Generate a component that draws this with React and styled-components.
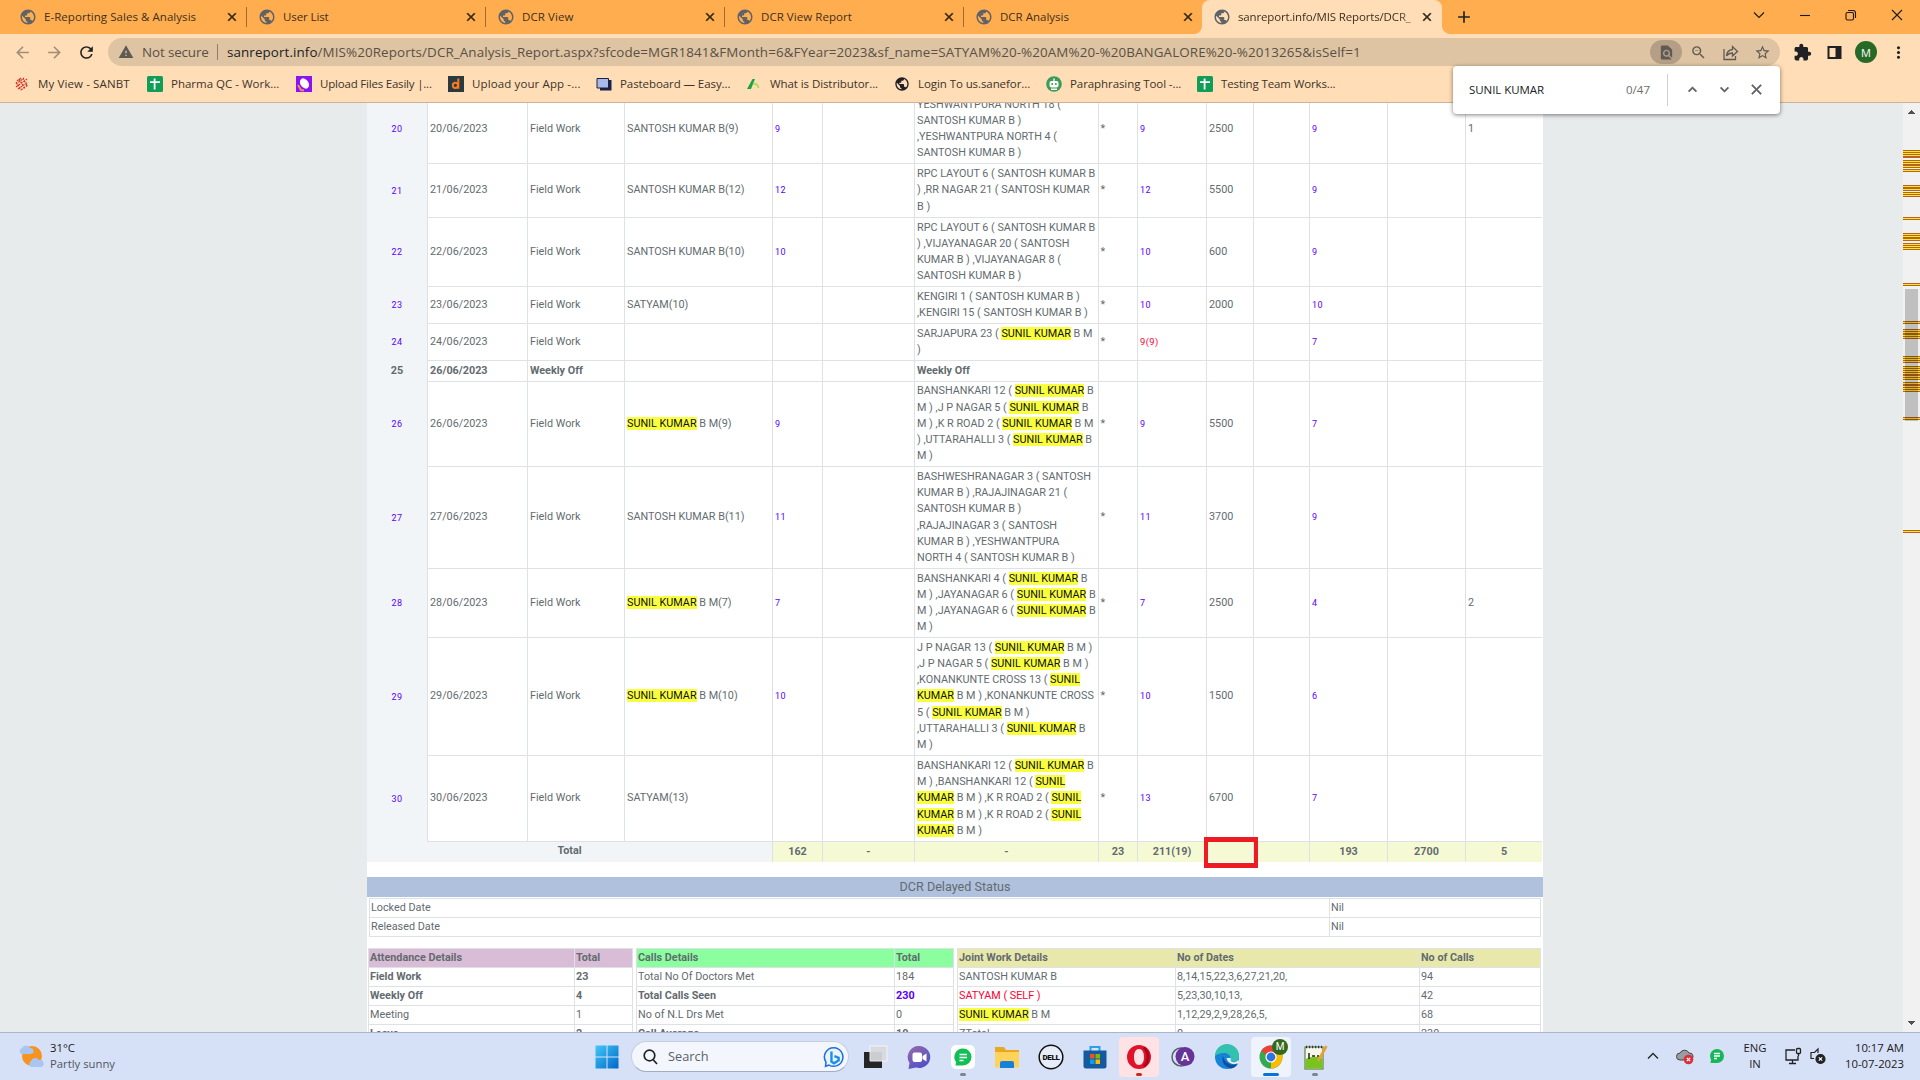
import React from "react";
import styled, { createGlobalStyle, css } from "styled-components";
import {
  MdArrowBack, MdArrowForward, MdRefresh, MdWarning, MdPublic, MdFindInPage,
  MdZoomOut, MdStarBorder, MdExtension, MdMoreVert, MdClose, MdAdd,
  MdKeyboardArrowUp, MdKeyboardArrowDown,
} from "react-icons/md";

const Global = createGlobalStyle`
  * { box-sizing: border-box; }
  html, body { margin: 0; padding: 0; overflow: hidden; }
  body { font-family: "Open Sans", "Noto Sans", sans-serif; font-size: 12px; color: #202124; }
`;

const Screen = styled.div`
  width: 1920px; height: 1080px; display: flex; flex-direction: column;
  position: relative; overflow: hidden;
`;

/* ---------- tab strip ---------- */
const TabStrip = styled.div`
  height: 34px; flex: none; background: #ffad4f; display: flex; padding-left: 8px;
`;
const Tab = styled.div`
  width: 239px; height: 34px; display: flex; align-items: center; position: relative;
  padding: 0 8px 0 12px; color: #3c3020; background: ${(p) => (p.$active ? "#ffddb6" : "transparent")};
  border-radius: ${(p) => (p.$active ? "8px 8px 0 0" : "0")};
  ${(p) => p.$line && css`&::after { content: ""; position: absolute; right: 0; top: 7px; width: 1px; height: 20px; background: #9d6c35; }`}
  ${(p) => p.$active && css`
    width: 240px; margin-left: -1px;
    &::before, &::after { content: ""; position: absolute; bottom: 0; width: 8px; height: 8px; }
    &::before { left: -8px; background: radial-gradient(circle at 0 0, #ffad4f 7.5px, #ffddb6 8.2px); }
    &::after { right: -8px; background: radial-gradient(circle at 100% 0, #ffad4f 7.5px, #ffddb6 8.2px); }
  `}
`;
const TabTitle = styled.span`
  flex: 1; margin-left: 8px; padding-bottom: 2px; white-space: nowrap; overflow: hidden; font-size: 11.5px;
  letter-spacing: ${(p) => p.$ls || 0}px;
  ${(p) => p.$fade && css`mask-image: linear-gradient(90deg, #000 88%, transparent 103%);`}
`;
const Fav = styled(MdPublic)`
  width: 18px; height: 18px; color: ${(p) => p.color || "#5f6368"}; margin: 0 -1px; flex: none;
`;
const TabClose = styled(MdClose)`
  width: 14px; height: 14px; color: #2f2718; flex: none;
  path:not([fill="none"]) { stroke: #2f2718; stroke-width: 1; }
`;
const NewTab = styled.div`width: 44px; display: flex; align-items: center; justify-content: center; svg { width: 20px; height: 20px; }`;
const WinButtons = styled.div`
  margin-left: auto; display: flex; align-items: center; height: 29px;
  svg { width: 46px; height: 14px; fill: none; stroke: #1b1b1b; stroke-width: 1.1; }
`;

/* ---------- toolbar ---------- */
const Toolbar = styled.div`
  height: 36px; flex: none; background: #ffddb6; display: flex; align-items: center; padding-left: 6px;
`;
const NavButton = styled.div`
  width: 32px; display: flex; justify-content: center; color: ${(p) => (p.$dim ? "#a08e78" : "#202124")};
  svg { width: 19px; height: 19px; }
`;
const Omnibox = styled.div`
  margin-left: 6px; width: 1672px; height: 28px; border-radius: 14px; background: #dec4a2;
  display: flex; align-items: center; padding-left: 10px; font-size: 13.4px; color: #5a5046;
  svg { color: #5f5a54; flex: none; }
`;
const NotSecure = styled.span`margin-left: 8px; width: 75px; white-space: nowrap; letter-spacing: -0.12px;`;
const OmniLine = styled.i`width: 1px; height: 16px; background: #8f7d68; margin-right: 9px;`;
const Url = styled.span`
  flex: 1; white-space: nowrap; letter-spacing: 0.1px;
  b { font-weight: 400; color: #202124; }
`;
const OmniIcon = styled.div`
  width: 32px; height: 24px; border-radius: 12px; display: flex; align-items: center; justify-content: center;
  background: ${(p) => (p.$on ? "#b49f86" : "none")};
  svg { width: 17px; height: 17px; }
`;
const OmniTail = styled.i`width: 2px;`;
const ToolIcon = styled.div`
  width: 32px; display: flex; justify-content: center; margin-left: ${(p) => p.$gap || 0}px;
  svg { width: 19px; height: 19px; }
`;
const Avatar = styled.div`
  width: 22px; height: 22px; border-radius: 50%; background: #276a27; color: #fff; font-size: 11px;
  display: flex; align-items: center; justify-content: center;
`;

/* ---------- bookmarks ---------- */
const Bookmarks = styled.div`
  height: 33px; flex: none; background: #ffddb6; border-bottom: 1px solid #cdb294;
  display: flex; align-items: flex-start; padding: 6px 0 0 14px; color: #3c3428;
`;
const Bookmark = styled.div`
  width: ${(p) => p.$w}px; flex: none; display: flex; align-items: center; height: 16px; white-space: nowrap;
  font-size: 11.5px; letter-spacing: ${(p) => p.$ls}px;
  & > svg { width: 16px; height: 16px; margin-right: 8px; flex: none; }
  & > span { padding-bottom: 1px; }
`;

/* ---------- find bar ---------- */
const FindBar = styled.div`
  position: absolute; left: 1453px; top: 66px; width: 327px; height: 48px; z-index: 5; background: #fff;
  border-radius: 4px; box-shadow: 0 1px 4px rgba(0,0,0,.5); display: flex; align-items: center; padding-left: 16px;
  font-size: 11.5px; letter-spacing: 0; padding-bottom: 1px;
`;
const FindText = styled.span`padding-bottom: 1px; letter-spacing: -0.05px;`;
const FindCount = styled.span`margin-left: auto; color: #6c6c6c; padding: 0 17px 1px 0;`;
const FindLine = styled.i`width: 1px; height: 32px; background: #d0d0d0; margin-right: 8px;`;
const FindBtn = styled.div`
  width: 32px; display: flex; justify-content: center; color: #5f6368;
  svg { width: 17px; height: 17px; }
  path:not([fill="none"]) { stroke: #5f6368; stroke-width: .8; }
  &:last-child { margin-right: 8px; }
`;

/* ---------- page ---------- */
const Viewport = styled.div`height: 929px; flex: none; display: flex; background: #e7ebec; overflow: hidden;`;
const Page = styled.div`
  width: 1176px; margin-left: 367px; background: #fff; height: 929px; overflow: hidden; position: relative; flex: none;
  font-family: Roboto, sans-serif; font-size: 10.8px; line-height: 16.2px; color: #636b70;
`;
const COLS = "60px 100px 97px 148px 50px 92px 184px 39px 69px 47px 56px 78px 78px 77px";
const Report = styled.div`margin-top: -8px; width: 1175px;`;
const Row = styled.div`
  display: grid; grid-template-columns: ${COLS}; height: ${(p) => p.$h}px;
  font-weight: ${(p) => (p.$bold ? 700 : 400)};
`;
const Cell = styled.div`
  border-left: 1px solid #dee2e6; border-bottom: 1px solid #dee2e6; padding-left: ${(p) => p.$pad || 2}px;
  display: flex; align-items: center; white-space: nowrap;
`;
const SerialCell = styled.div`
  background: #f1f5f8; display: flex; align-items: center; justify-content: center;
`;
const Num = styled.span`
  font-size: ${(p) => (p.$red ? 9.4 : 9)}px; letter-spacing: .4px; color: ${(p) => (p.$red ? "#ff0033" : "#5a00ff")};
`;
const Mark = styled.mark`background: #f9ff3e; color: #111;`;
const TotalRow = styled.div`
  display: grid; grid-template-columns: 405px 50px 92px 184px 39px 69px 47px 56px 78px 78px 77px; height: 20px;
  font-weight: 700;
`;
const TotalCell = styled.div`
  background: ${(p) => (p.$lead ? "#f1f5f8" : "#f6fad4")}; border-left: ${(p) => (p.$lead ? "0" : "1px solid #dee2e6")};
  display: flex; align-items: center; justify-content: center; padding-bottom: ${(p) => (p.$lead ? "2px" : "0")};
`;
const RedBox = styled.div`
  position: absolute; left: 837px; top: 734px; width: 54px; height: 31px; border: 5px solid #ed1c24; border-width: 5px 4px;
`;
const Banner = styled.div`
  margin-top: 15px; height: 20px; background: #b0c1dd; display: flex; justify-content: center; align-items: center;
  font-size: 12.6px;
`;
const Sheet = styled.div`
  display: grid; grid-template-columns: ${(p) => p.$cols}; border-top: 1px solid #dee2e6; border-right: 1px solid #dee2e6;
`;
const SheetCell = styled.div`
  height: 19px; border-left: 1px solid #dee2e6; border-bottom: 1px solid #dee2e6; white-space: nowrap;
  padding-left: 1px; line-height: 18px; background: ${(p) => p.$bg || "#fff"};
  font-weight: ${(p) => (p.$bold ? 700 : 400)}; color: ${(p) => p.$color || "inherit"};
`;
const DelayedWrap = styled.div`margin: 1px 2px 0;`;
const Summaries = styled.div`display: flex; gap: 3px; margin: 11px 2px 0 1px;`;

const ScrollTrack = styled.div`
  width: 17px; height: 929px; margin-left: auto; background: #f1f1f1; flex: none;
  svg { display: block; }
`;

/* ---------- taskbar ---------- */
const Taskbar = styled.div`
  height: 48px; flex: none; background: #d6e1f7; border-top: 1px solid #a9b5c9; display: flex; align-items: center;
  font-size: 11.3px; color: #1b1b1b; line-height: 16px;
`;
const Weather = styled.div`
  width: 585px; padding-left: 18px; display: flex; align-items: center; gap: 6px; padding-bottom: 2px;
  svg { width: 26px; height: 26px; }
  small { font-size: 11.3px; color: #50565f; display: block; }
`;
const TaskCell = styled.div`width: 44px; height: 47px; display: flex; align-items: center; justify-content: center; position: relative;`;
const Tile = styled.div`
  width: 40px; height: 40px; border-radius: 4px; display: flex; align-items: center; justify-content: center;
  background: ${(p) => p.$bg || "none"};
  svg { width: 26px; height: 26px; }
`;
const Dot = styled.i`
  position: absolute; bottom: 4px; height: 3px; border-radius: 2px; width: ${(p) => p.$w || 6}px; background: ${(p) => p.$c || "#7c8694"};
`;
const SearchPill = styled.div`
  margin: 0 4px 0 2px; width: 218px; height: 31px; border-radius: 16px; background: #f3f6fd; border: 1px solid #c6cfe0; border-bottom-color: #a3adc0;
  display: flex; align-items: center; padding: 0 3px 0 10px; font-size: 12.8px; color: #5c6169;
  span { flex: 1; margin-left: 10px; padding-bottom: 1px; }
`;
const Tray = styled.div`
  margin-left: auto; display: flex; align-items: center; padding-right: 16px; padding-bottom: 1px;
  svg { flex: none; }
`;
const TrayIcon = styled.div`display: flex; margin-right: ${(p) => p.$gap}px;`;
const Lang = styled.div`width: 32px; text-align: center; margin-right: 13px;`;
const Clock = styled.div`width: 64px; text-align: right; white-space: nowrap; direction: ltr;`;
const ChromeBadge = styled.div`
  position: absolute; right: 5px; top: 6px; width: 16px; height: 16px; border-radius: 50%; background: #33691e; color: #fff;
  font: 10px/16px Roboto, sans-serif; text-align: center;
`;

/* ---------- data ---------- */
const rows = [
  { n: "20", h: 69, date: "20/06/2023", who: "SANTOSH KUMAR B(9)", a: "9", terr: ["YESHWANTPURA NORTH 18 (", "SANTOSH KUMAR B )", ",YESHWANTPURA NORTH 4 (", "SANTOSH KUMAR B )"], met: "9", pob: "2500", chem: "9", last: "1" },
  { n: "21", h: 54, date: "21/06/2023", who: "SANTOSH KUMAR B(12)", a: "12", terr: ["RPC LAYOUT 6 ( SANTOSH KUMAR B", ") ,RR NAGAR 21 ( SANTOSH KUMAR", "B )"], met: "12", pob: "5500", chem: "9" },
  { n: "22", h: 69, date: "22/06/2023", who: "SANTOSH KUMAR B(10)", a: "10", terr: ["RPC LAYOUT 6 ( SANTOSH KUMAR B", ") ,VIJAYANAGAR 20 ( SANTOSH", "KUMAR B ) ,VIJAYANAGAR 8 (", "SANTOSH KUMAR B )"], met: "10", pob: "600", chem: "9" },
  { n: "23", h: 37, date: "23/06/2023", who: "SATYAM(10)", terr: ["KENGIRI 1 ( SANTOSH KUMAR B )", ",KENGIRI 15 ( SANTOSH KUMAR B )"], met: "10", pob: "2000", chem: "10" },
  { n: "24", h: 37, date: "24/06/2023", terr: ["SARJAPURA 23 ( [SUNIL KUMAR] B M", ")"], met: "9(9)", red: true, chem: "7" },
  { n: "25", h: 21, date: "26/06/2023", off: true, terr: ["Weekly Off"] },
  { n: "26", h: 85, date: "26/06/2023", who: "[SUNIL KUMAR] B M(9)", a: "9", terr: ["BANSHANKARI 12 ( [SUNIL KUMAR] B", "M ) ,J P NAGAR 5 ( [SUNIL KUMAR] B", "M ) ,K R ROAD 2 ( [SUNIL KUMAR] B M", ") ,UTTARAHALLI 3 ( [SUNIL KUMAR] B", "M )"], met: "9", pob: "5500", chem: "7" },
  { n: "27", h: 102, date: "27/06/2023", who: "SANTOSH KUMAR B(11)", a: "11", terr: ["BASHWESHRANAGAR 3 ( SANTOSH", "KUMAR B ) ,RAJAJINAGAR 21 (", "SANTOSH KUMAR B )", ",RAJAJINAGAR 3 ( SANTOSH", "KUMAR B ) ,YESHWANTPURA", "NORTH 4 ( SANTOSH KUMAR B )"], met: "11", pob: "3700", chem: "9" },
  { n: "28", h: 69, date: "28/06/2023", who: "[SUNIL KUMAR] B M(7)", a: "7", terr: ["BANSHANKARI 4 ( [SUNIL KUMAR] B", "M ) ,JAYANAGAR 6 ( [SUNIL KUMAR] B", "M ) ,JAYANAGAR 6 ( [SUNIL KUMAR] B", "M )"], met: "7", pob: "2500", chem: "4", last: "2" },
  { n: "29", h: 118, date: "29/06/2023", who: "[SUNIL KUMAR] B M(10)", a: "10", terr: ["J P NAGAR 13 ( [SUNIL KUMAR] B M )", ",J P NAGAR 5 ( [SUNIL KUMAR] B M )", ",KONANKUNTE CROSS 13 ( [SUNIL]", "[KUMAR] B M ) ,KONANKUNTE CROSS", "5 ( [SUNIL KUMAR] B M )", ",UTTARAHALLI 3 ( [SUNIL KUMAR] B", "M )"], met: "10", pob: "1500", chem: "6" },
  { n: "30", h: 86, date: "30/06/2023", who: "SATYAM(13)", terr: ["BANSHANKARI 12 ( [SUNIL KUMAR] B", "M ) ,BANSHANKARI 12 ( [SUNIL]", "[KUMAR] B M ) ,K R ROAD 2 ( [SUNIL]", "[KUMAR] B M ) ,K R ROAD 2 ( [SUNIL]", "[KUMAR] B M )"], met: "13", pob: "6700", chem: "7" },
];

const Marked = ({ text = "" }) => (
  <span>
    {text.split(/(\[[^\]]+\])/).map((s, i) => (s[0] === "[" ? <Mark key={i}>{s.slice(1, -1)}</Mark> : s))}
  </span>
);

const DayRow = ({ r }) => (
  <Row $h={r.h} $bold={r.off}>
    <SerialCell>{r.off ? r.n : <Num>{r.n}</Num>}</SerialCell>
    <Cell>{r.date}</Cell>
    <Cell>{r.off ? "Weekly Off" : "Field Work"}</Cell>
    <Cell><Marked text={r.who} /></Cell>
    <Cell><Num>{r.a}</Num></Cell>
    <Cell />
    <Cell><div>{r.terr.map((t, i) => <div key={i}><Marked text={t} /></div>)}</div></Cell>
    <Cell $pad={1.5}>{r.off ? "" : "*"}</Cell>
    <Cell><Num $red={r.red}>{r.met}</Num></Cell>
    <Cell>{r.pob}</Cell>
    <Cell />
    <Cell><Num>{r.chem}</Num></Cell>
    <Cell />
    <Cell>{r.last}</Cell>
  </Row>
);

const totals = ["162", "-", "-", "23", "211(19)", "", "", "193", "2700", "5"];

const Table = ({ cols, head, bg, data }) => (
  <Sheet $cols={cols}>
    {head.map((h) => <SheetCell key={h} $bold $bg={bg}>{h}</SheetCell>)}
    {data.map((r, i) => r.c.map((c, j) => (
      <SheetCell key={i + "-" + j} $bold={r.bold} $color={(j === 0 && r.color) || (j === 1 && r.numColor)}>
        <Marked text={c} />
      </SheetCell>
    )))}
  </Sheet>
);

/* vertical positions of find hits on the scroll track: b = edge, y = core */
const hits = [
  [150, "bybybybb"], [160, "bybybbyb"], [169, "byb"], [185, "bybbyb"], [192, "bybyb"], [217, "byb"],
  [233, "bybybbyb"], [243, "bybybyb"], [283, "byb"], [321, "byb"], [329, "bybybbybyb"], [356, "bybybyb"],
  [366, "bybybybybbybyb"], [382, "bybbybybyb"], [417, "byb"], [530, "byb"],
];
const Scrollbar = () => (
  <ScrollTrack>
    <svg width="17" height="929" shapeRendering="crispEdges">
      {hits.map(([y, p]) => p.split("").map((c, i) => (
        <rect key={y + "-" + i} x="0" y={y - 103 + i} width="17" height="1" fill={c === "b" ? "#b5651a" : "#ffe432"} />
      )))}
      <rect x="2" y="186" width="13" height="132" fill="rgba(0,0,0,.2)" />
      <path d="M5 11h7l-3.5-4z" fill="#505050" />
      <path d="M5 918h7l-3.5 4z" fill="#505050" />
    </svg>
  </ScrollTrack>
);

const Glyph = ({ children }) => <svg viewBox="0 0 16 16">{children}</svg>;
const Sheets = () => (
  <Glyph><rect width="16" height="16" rx="1.5" fill="#0f9d58" /><path d="M3 6.2h10M7.6 2.5v11" stroke="#fff" strokeWidth="1.8" /></Glyph>
);

const bookmarks = [
  [133, "My View - SANBT", 0.12, <Glyph><g stroke="#d1342b" strokeWidth="1.2" fill="none" strokeDasharray="2 1"><path d="M3 5l4-3M2 8l8-6M2 11l11-8M4 13l10-7M7 14l7-5M2 6l5 8M5 3l6 10M9 2l4 8" /></g></Glyph>],
  [149, "Pharma QC - Work...", 0, <Sheets />],
  [152, "Upload Files Easily |...", -0.2, <Glyph><rect width="16" height="16" fill="#8a12f5" /><ellipse cx="8.5" cy="7.5" rx="4" ry="5.6" transform="rotate(-35 8.5 7.5)" fill="#fff" /><path d="M2 9l3 5 3 .5" stroke="#f08b5c" strokeWidth="2" fill="none" /></Glyph>],
  [148, "Upload your App -...", 0.12, <Glyph><rect width="16" height="16" fill="#2b3a3f" /><circle cx="7.4" cy="9.3" r="2.6" fill="none" stroke="#ff7a1a" strokeWidth="2" /><path d="M10.3 2.5v10.3" stroke="#ff7a1a" strokeWidth="2" /></Glyph>],
  [150, "Pasteboard — Easy...", -0.08, <Glyph><path d="M4 4h11.500v10.500H4z" fill="#1b2145" /><path d="M1 2.500h11.500v9.500H1z" fill="#a9b8e8" stroke="#1b2145" /></Glyph>],
  [149, "What is Distributor...", -0.08, <Glyph><path d="M1 13L6.500 3h2.500L5 13z" fill="#19a34a" /><path d="M7 8c3-1 5 1 5.500 4" stroke="#a7e05d" strokeWidth="2" fill="none" /></Glyph>],
  [151, "Login To us.sanefor...", -0.08, <Fav color="#202124" />],
  [151, "Paraphrasing Tool -...", -0.08, <Glyph><circle cx="8" cy="8" r="7.800" fill="#3f9a55" /><rect x="3.500" y="5" width="9" height="6.500" rx="2" fill="#fff" /><path d="M8 2.500V5M5 13.200h6" stroke="#fff" strokeWidth="1.400" /><circle cx="6.200" cy="8" r="1" fill="#3f9a55" /><circle cx="9.800" cy="8" r="1" fill="#3f9a55" /></Glyph>],
  [150, "Testing Team Works...", -0.13, <Sheets />],
];

const tabs = [
  ["E-Reporting Sales & Analysis", 0.05], ["User List", -0.1], ["DCR View", 0.1], ["DCR View Report", 0.05], ["DCR Analysis", 0],
];

const I = ({ children, ...p }) => <svg viewBox="0 0 26 26" {...p}>{children}</svg>;
const icons = {
  start: <I><defs><linearGradient id="win" x1="0" y1="0" x2="1" y2="1"><stop stopColor="#42c8f8" /><stop offset="1" stopColor="#0067c8" /></linearGradient></defs><path d="M1.500 1.500h11v11h-11zM13.500 1.500h11v11h-11zM1.500 13.500h11v11h-11zM13.500 13.500h11v11h-11z" fill="url(#win)" /></I>,
  taskview: <I><path d="M2 8h18v16H2z" fill="#252525" /><path d="M8 2h17v15H8z" fill="#d9dadd" stroke="#f6f6f6" opacity=".93" /></I>,
  chat: <I><defs><linearGradient id="chat" x1="0" y1="0" x2="0.6" y2="1"><stop stopColor="#9a6aa8" /><stop offset="1" stopColor="#4f52c8" /></linearGradient></defs><path d="M13 2a11 11 0 1 1-3 21.500L2.500 25l1-6A11 11 0 0 1 13 2z" fill="url(#chat)" /><rect x="6.500" y="8.500" width="9.500" height="9.500" rx="2" fill="#fff" /><path d="M16.500 12l4-2.500v8l-4-2.500z" fill="#fff" /></I>,
  green: <I><rect x="1" y="1" width="24" height="24" rx="5" fill="#fff" /><path d="M13 4.500a8.500 8.500 0 0 1 0 17H5.500L6 18A8.500 8.500 0 0 1 13 4.500z" fill="#10bf55" /><path d="M9.500 10.500h7.500M9.500 13.500h7.500M9.500 16.500h4" stroke="#fff" strokeWidth="1.600" /></I>,
  folder: <I><path d="M1 3h9l2 3h13v17H1z" fill="#e9a820" /><path d="M1 8h24v15.500H1z" fill="#ffd35a" /><path d="M6 24v-5q0-2 2-2h10q2 0 2 2v5z" fill="#1681d8" /></I>,
  dell: <I><circle cx="13" cy="13" r="11.800" fill="#e6edf8" stroke="#111" strokeWidth="1.500" /><text x="13" y="16" textAnchor="middle" fontFamily="Roboto" fontSize="8" fontWeight="900" fill="#111" letterSpacing="-.3">DELL</text></I>,
  store: <I><path d="M8.500 7V3h9v4" fill="none" stroke="#2aa0e8" strokeWidth="2" /><path d="M1.500 6.500h23V22q0 2.500-2.500 2.500H4Q1.500 24.500 1.500 22z" fill="#155a9e" /><path d="M8 10h4.500v4.500H8z" fill="#f25022" /><path d="M13.500 10H18v4.500h-4.500z" fill="#7fba00" /><path d="M8 15.500h4.500V20H8z" fill="#00a4ef" /><path d="M13.500 15.500H18V20h-4.500z" fill="#ffb900" /></I>,
  opera: <I><path fillRule="evenodd" d="M13 1a12 12 0 1 0 0 24a12 12 0 1 0 0-24zM13 5c3.300 0 5 3.500 5 8s-1.700 8-5 8s-5-3.500-5-8s1.700-8 5-8z" fill="#e3122b" /><path d="M18 3.500q4 4 4 9.500t-4 9.500" stroke="#a8081d" strokeWidth="3" fill="none" /></I>,
  a: <I><circle cx="11" cy="13" r="9" fill="none" stroke="#5a5f69" strokeWidth="1.500" /><circle cx="15" cy="12.500" r="9.500" fill="#663399" /><text x="15" y="17" textAnchor="middle" fontFamily="Roboto" fontSize="13" fontWeight="500" fill="#fff">A</text></I>,
  edge: <I><circle cx="13" cy="13" r="12" fill="#1583d8" /><path d="M1 12A12 12 0 0 1 25 12c0 4-3 6-6.500 6s-3-2-2-4c0-3-3-5-6.500-5S2 10.500 1 12z" fill="#35c1b0" /><path d="M9 12c-2 6 2 11 8 12.500c3-.5 5.500-2 7-5c-5 3-13 1-15-7.500z" fill="#0d4f9e" /><path d="M17 14c-1 2-.5 4 2 4.300c2 0 4-.6 5.200-2.300l.3 2.500c-5 3.500-11 .5-12-4.500z" fill="#e6f2fb" /></I>,
  chrome: <I><circle cx="13" cy="13" r="11.500" fill="#34a853" /><path d="M13 13L3 7.300A11.500 11.500 0 0 1 23 7.300z" fill="#ea4335" /><path d="M13 13L23 7.300A11.500 11.500 0 0 1 13 24.500z" fill="#fbbc04" /><circle cx="13" cy="13" r="5.600" fill="#fff" /><circle cx="13" cy="13" r="4.400" fill="#2f74e0" /></I>,
  notepad: <I><rect x="3" y="3" width="18" height="22" fill="#f5f7e8" stroke="#4c6b2a" /><path d="M3.500 15q9-4 17-1v10.500h-17z" fill="#79c31e" /><path d="M4 3h16" stroke="#333" strokeWidth="2.500" strokeDasharray="1.200 1.800" /><path d="M7 9v6M10 12h3M15 12h2" stroke="#222" strokeWidth="1.500" /><path d="M24.500 2L16 17" stroke="#e8a030" strokeWidth="2.600" /></I>,
  bing: <I><path d="M13 2a11 11 0 1 1-6 20.500L3 24l.5-5A11 11 0 0 1 13 2z" fill="#eaf4ff" stroke="#1b6fe0" strokeWidth="1.800" /><path d="M10 6.500v12l3 2l5.500-3.500v-3l-5-2" fill="none" stroke="#1c8ce8" strokeWidth="2.800" /></I>,
};

const apps = [
  { k: "taskview" }, { k: "chat" }, { k: "green", dot: {} }, { k: "folder" }, { k: "dell" }, { k: "store" },
  { k: "opera", bg: "#ffe3e4", dot: { $c: "#c42b1c" } }, { k: "a" }, { k: "edge" },
  { k: "chrome", bg: "#eff4fc", dot: { $w: 16, $c: "#0a74d6" } }, { k: "notepad", dot: {} },
];

export default function App() {
  return (
    <Screen>
      <Global />
      <TabStrip>
        {tabs.map(([t, ls]) => (
          <Tab key={t} $line={t !== "DCR Analysis"}><Fav /><TabTitle $ls={ls}>{t}</TabTitle><TabClose /></Tab>
        ))}
        <Tab $active><Fav /><TabTitle $fade $ls={-0.15}>sanreport.info/MIS Reports/DCR_</TabTitle><TabClose /></Tab>
        <NewTab><MdAdd /></NewTab>
        <WinButtons>
          <svg viewBox="0 0 46 14"><path d="M18 4.500l5 5 5-5" /></svg>
          <svg viewBox="0 0 46 14"><path d="M18 7.500h10" /></svg>
          <svg viewBox="0 0 46 14"><rect x="18" y="4.500" width="7.500" height="7.500" rx="1.500" /><path d="M20 2.500h5q2.500 0 2.500 2.500v5" /></svg>
          <svg viewBox="0 0 46 14"><path d="M18 2l10 10M28 2L18 12" /></svg>
        </WinButtons>
      </TabStrip>
      <Toolbar>
        <NavButton $dim><MdArrowBack /></NavButton>
        <NavButton $dim><MdArrowForward /></NavButton>
        <NavButton><MdRefresh /></NavButton>
        <Omnibox>
          <MdWarning size={16} />
          <NotSecure>Not secure</NotSecure><OmniLine />
          <Url><b>sanreport.info</b>/MIS%20Reports/DCR_Analysis_Report.aspx?sfcode=MGR1841&amp;FMonth=6&amp;FYear=2023&amp;sf_name=SATYAM%20-%20AM%20-%20BANGALORE%20-%2013265&amp;isSelf=1</Url>
          <OmniIcon $on><MdFindInPage /></OmniIcon>
          <OmniIcon><MdZoomOut /></OmniIcon>
          <OmniIcon><svg viewBox="0 0 17 17" fill="none" stroke="currentColor" strokeWidth="1.300"><path d="M2 5v10.500h11.500V12M4.500 12q.5-6 6-6.500V2.500l5 5-5 4.500V9q-4 0-6 3z" /></svg></OmniIcon>
          <OmniIcon><MdStarBorder /></OmniIcon>
          <OmniTail />
        </Omnibox>
        <ToolIcon $gap={6}><MdExtension /></ToolIcon>
        <ToolIcon><svg viewBox="0 0 19 19"><path d="M3.500 4h12v11h-12z" fill="none" stroke="#202124" strokeWidth="2" /><path d="M10.500 4h5v11h-5z" fill="#202124" /></svg></ToolIcon>
        <ToolIcon><Avatar>M</Avatar></ToolIcon>
        <ToolIcon><MdMoreVert /></ToolIcon>
      </Toolbar>
      <Bookmarks>
        {bookmarks.map(([w, t, ls, ic]) => <Bookmark key={t} $w={w} $ls={ls}>{ic}<span>{t}</span></Bookmark>)}
      </Bookmarks>
      <FindBar>
        <FindText>SUNIL KUMAR</FindText><FindCount>0/47</FindCount><FindLine />
        <FindBtn><MdKeyboardArrowUp /></FindBtn><FindBtn><MdKeyboardArrowDown /></FindBtn><FindBtn><MdClose /></FindBtn>
      </FindBar>

      <Viewport>
        <Page>
          <Report>
            {rows.map((r) => <DayRow key={r.n} r={r} />)}
            <TotalRow>
              <TotalCell $lead>Total</TotalCell>
              {totals.map((t, i) => <TotalCell key={i}>{t}</TotalCell>)}
            </TotalRow>
          </Report>
          <RedBox />
          <Banner>DCR Delayed Status</Banner>
          <DelayedWrap>
            <Sheet $cols="960px 1fr">
              <SheetCell>Locked Date</SheetCell><SheetCell>Nil</SheetCell>
              <SheetCell>Released Date</SheetCell><SheetCell>Nil</SheetCell>
            </Sheet>
          </DelayedWrap>
          <Summaries>
            <Table cols="206px 58px" bg="#d9bdd6" head={["Attendance Details", "Total"]} data={[
              { c: ["Field Work", "23"], bold: true }, { c: ["Weekly Off", "4"], bold: true },
              { c: ["Meeting", "1"] }, { c: ["Leave", "2"], bold: true }]} />
            <Table cols="258px 59px" bg="#8bff9f" head={["Calls Details", "Total"]} data={[
              { c: ["Total No Of Doctors Met", "184"] }, { c: ["Total Calls Seen", "230"], bold: true, numColor: "#5a00ff" },
              { c: ["No of N.L Drs Met", "0"] }, { c: ["Call Average", "10"], bold: true }]} />
            <Table cols="218px 244px 121px" bg="#e9e8ab" head={["Joint Work Details", "No of Dates", "No of Calls"]} data={[
              { c: ["SANTOSH KUMAR B", "8,14,15,22,3,6,27,21,20,", "94"] },
              { c: ["SATYAM ( SELF )", "5,23,30,10,13,", "42"], color: "#ff0033" },
              { c: ["[SUNIL KUMAR] B M", "1,12,29,2,9,28,26,5,", "68"] },
              { c: ["ZTotal", "0", "230"] }]} />
          </Summaries>
        </Page>
        <Scrollbar />
      </Viewport>

      <Taskbar>
        <Weather>
          <I><circle cx="14" cy="13" r="10" fill="#f79320" /><path d="M3 11a3.500 3.500 0 0 1 1-6 4.500 4.500 0 0 1 8 0 3 3 0 0 1 1 6z" fill="#a9c6f3" /><path d="M13 24a3.500 3.500 0 0 1 0-6 4.500 4.500 0 0 1 8-1 3.600 3.600 0 0 1 2 7z" fill="#a9c6f3" /></I>
          <div>31°C<small>Partly sunny</small></div>
        </Weather>
        <TaskCell><Tile>{icons.start}</Tile></TaskCell>
        <SearchPill>
          <svg width="16" height="16" viewBox="0 0 16 16" fill="none" stroke="#222" strokeWidth="1.700"><circle cx="7.500" cy="6.500" r="5.300" /><path d="M11 10.500l4 4.500" /></svg>
          <span>Search</span>
          {React.cloneElement(icons.bing, { width: 22, height: 22 })}
        </SearchPill>
        {apps.map((a) => (
          <TaskCell key={a.k}><Tile $bg={a.bg}>{icons[a.k]}</Tile>{a.dot && <Dot {...a.dot} />}{a.k === "chrome" && <ChromeBadge>M</ChromeBadge>}</TaskCell>
        ))}
        <Tray>
          <TrayIcon $gap={17}><svg width="12" height="12" viewBox="0 0 12 12" fill="none" stroke="#222" strokeWidth="1.300"><path d="M1 8.500l5-5 5 5" /></svg></TrayIcon>
          <TrayIcon $gap={15}><svg width="18" height="18" viewBox="0 0 18 18"><path d="M4 13a3.500 3.500 0 0 1 0-7 5 5 0 0 1 9 0 3.500 3.500 0 0 1 1 7z" fill="#999da3" stroke="#444" /><circle cx="12.500" cy="12.500" r="4.800" fill="#dc2f3b" /><path d="M10.800 10.800l3.400 3.400M14.200 10.800l-3.400 3.400" stroke="#fff" strokeWidth="1.200" /></svg></TrayIcon>
          <TrayIcon $gap={14}><svg width="16" height="16" viewBox="0 0 16 16"><path d="M8 1a7 7 0 0 1 0 14H1.500l.5-3.500A7 7 0 0 1 8 1z" fill="#14b858" /><path d="M5 5.500h6M5 8h6M5 10.500h3" stroke="#fff" strokeWidth="1.300" /></svg></TrayIcon>
          <Lang>ENG<br />IN</Lang>
          <TrayIcon $gap={7}><svg width="18" height="18" viewBox="0 0 18 18" fill="none" stroke="#222" strokeWidth="1.300"><path d="M11 3H2v10h12V9M5 16.500h7M8.500 13v3.500" /><rect x="12.500" y="1.500" width="4" height="5" rx="1" /><path d="M14.500 6.500V9" /></svg></TrayIcon>
          <TrayIcon $gap={13}><svg width="18" height="18" viewBox="0 0 18 18" fill="none" stroke="#222" strokeWidth="1.200"><path d="M9 6V2L5.500 5.500H2v6h3" /><circle cx="11.500" cy="12" r="4.500" fill="#222" /><path d="M9.800 10.300l3.400 3.400M13.200 10.300l-3.400 3.400" stroke="#fff" /></svg></TrayIcon>
          <Clock>10:17 AM<br />10-07-2023</Clock>
        </Tray>
      </Taskbar>
    </Screen>
  );
}
